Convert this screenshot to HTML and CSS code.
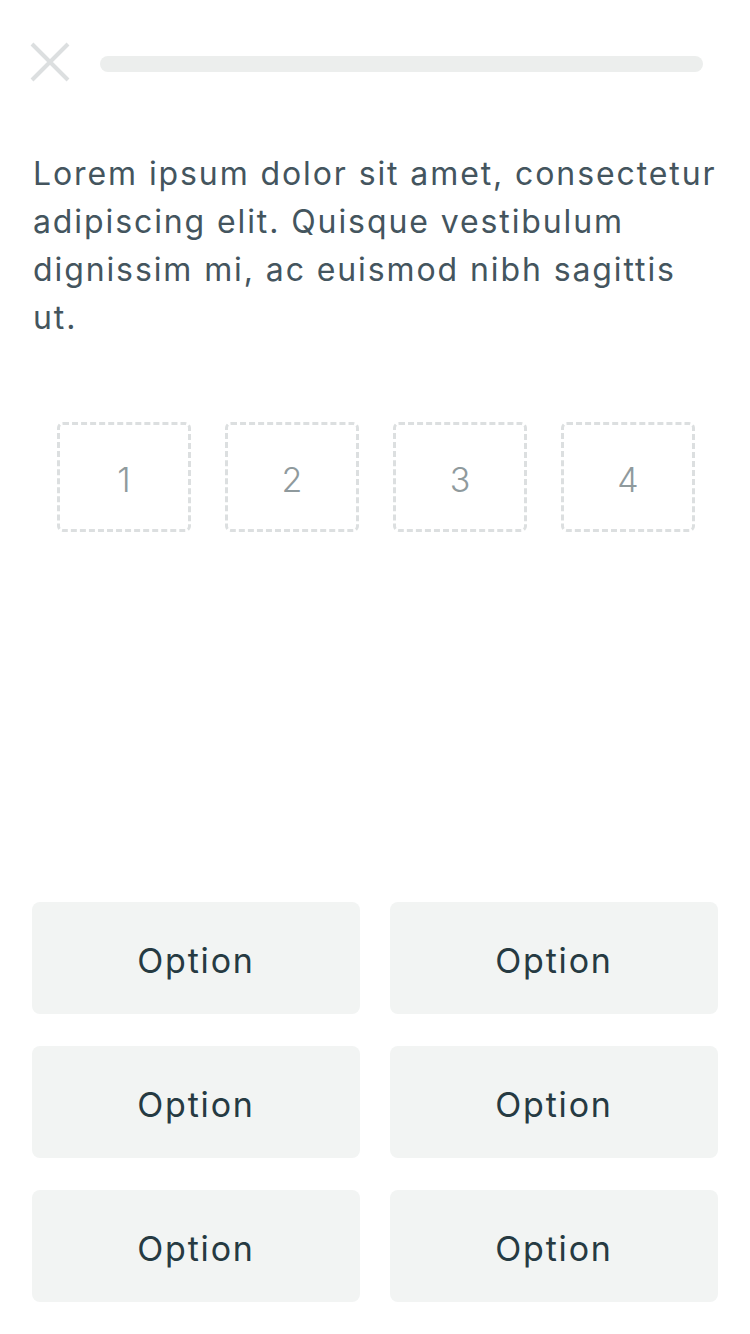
FILE: index.html
```html
<!DOCTYPE html>
<html>
<head>
<meta charset="utf-8">
<link rel="stylesheet" href="styles.css">
</head>
<body>
<div class="screen">
  <header class="top">
    <button class="close" aria-label="Close">
      <svg width="40" height="40" viewBox="0 0 40 40"><path d="M2 2 L38 38 M38 2 L2 38" stroke="#dcdfe0" stroke-width="4" fill="none"/></svg>
    </button>
    <div class="progress"></div>
  </header>
  <p class="question">Lorem ipsum dolor sit amet, consectetur adipiscing elit. Quisque vestibulum dignissim mi, ac euismod nibh sagittis ut.</p>
  <div class="slots">
    <div class="slot">1</div>
    <div class="slot">2</div>
    <div class="slot">3</div>
    <div class="slot">4</div>
  </div>
  <div class="options">
    <button class="option">Option</button>
    <button class="option">Option</button>
    <button class="option">Option</button>
    <button class="option">Option</button>
    <button class="option">Option</button>
    <button class="option">Option</button>
  </div>
</div>
</body>
</html>
```
FILE: styles.css
```css
html, body {
  margin: 0;
  padding: 0;
  background: #ffffff;
}
.screen {
  width: 750px;
  height: 1334px;
  display: flex;
  flex-direction: column;
  font-family: "Inter", "Open Sans", "Liberation Sans", sans-serif;
}
.top {
  display: flex;
  align-items: center;
  padding: 42px 47px 0 30px;
  gap: 30px;
}
.close {
  width: 40px;
  height: 40px;
  padding: 0;
  border: 0;
  background: none;
  display: block;
}
.close svg { display: block; }
.progress {
  flex: 1;
  height: 16px;
  border-radius: 8px;
  background: #eceeed;
  margin-top: 4px;
}
.question {
  margin: 68px 20px 0 33px;
  font-size: 32px;
  line-height: 48px;
  color: #44555e;
  letter-spacing: 1.9px;
}
.slots {
  display: flex;
  gap: 34px;
  margin: 80px 0 0 57px;
}
.slot {
  width: 128px;
  height: 104px;
  border: 3px dashed #dcdfe0;
  border-radius: 6px;
  display: flex;
  align-items: center;
  justify-content: center;
  padding-top: 5px;
  box-sizing: content-box;
  height: 99px;
  font-size: 34px;
  font-weight: 300;
  color: #8f9a9d;
}
.options {
  margin: auto 32px 32px 32px;
  display: grid;
  grid-template-columns: 328px 328px;
  column-gap: 30px;
  row-gap: 32px;
}
.option {
  height: 112px;
  border: 0;
  border-radius: 8px;
  background: #f2f4f3;
  font-family: "Inter", "Open Sans", "Liberation Sans", sans-serif;
  font-size: 34px;
  color: #263a42;
  padding: 4px 0 0 0;
  letter-spacing: 1.8px;
}
```
